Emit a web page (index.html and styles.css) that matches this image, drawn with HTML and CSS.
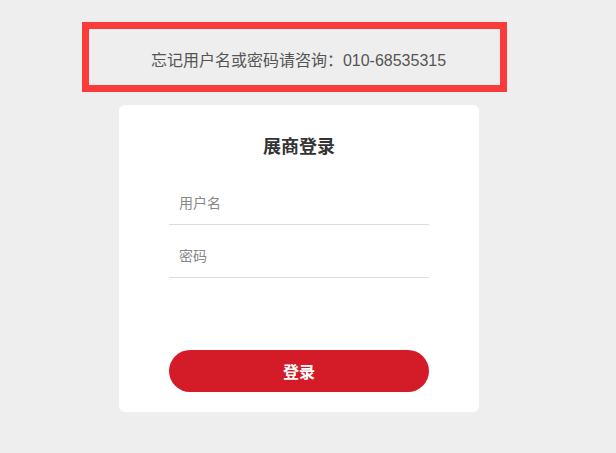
FILE: index.html
```html
<!DOCTYPE html>
<html lang="zh-CN">
<head>
    <meta charset="UTF-8">
    <meta name="viewport" content="width=device-width, initial-scale=1.0">
    <title>展商登录</title>
    <link rel="stylesheet" href="styles.css">
</head>
<body>
    <div class="notice">忘记用户名或密码请咨询：010-68535315</div>

    <form class="login-card" id="loginForm">
        <h2 class="login-title">展商登录</h2>
        <div class="form-group">
            <input type="text" name="username" placeholder="用户名">
        </div>
        <div class="form-group">
            <input type="password" name="password" placeholder="密码">
        </div>
        <button type="submit">登录</button>
    </form>
</body>
</html>
```

FILE: styles.css
```css
body {
    margin: 0;
    padding-top: 22px;
    background-color: #eeeeee;
    font-family: "Liberation Sans", "Noto Sans CJK SC", sans-serif;
}
.notice {
    width: 403px;
    margin-left: 82px;
    padding: 22px 0 14px 8px;
    border: 7px solid #fb3a3a;
    font-size: 16px;
    line-height: 20px;
    color: #555;
    text-align: center;
}
.login-card {
    width: 260px;
    margin: 13px 0 0 119px;
    padding: 30px 50px 20px;
    background-color: #fff;
    border-radius: 6px;
}
.login-title {
    margin: 0 0 23px;
    font-size: 18px;
    line-height: 24px;
    font-weight: bold;
    color: #333;
    text-align: center;
}
.form-group + .form-group {
    margin-top: 10px;
}
input {
    display: block;
    width: 250px;
    height: 42px;
    padding: 0 0 0 10px;
    border: none;
    border-bottom: 1px solid #dddddd;
    outline: none;
    font-family: inherit;
    font-size: 14px;
    color: #333;
}
input::placeholder {
    color: #888;
}
button {
    display: block;
    width: 260px;
    height: 42px;
    margin-top: 72px;
    border: none;
    border-radius: 21px;
    background-color: #d41c29;
    color: #fff;
    font-family: inherit;
    font-size: 16px;
    font-weight: bold;
    cursor: pointer;
}
```
